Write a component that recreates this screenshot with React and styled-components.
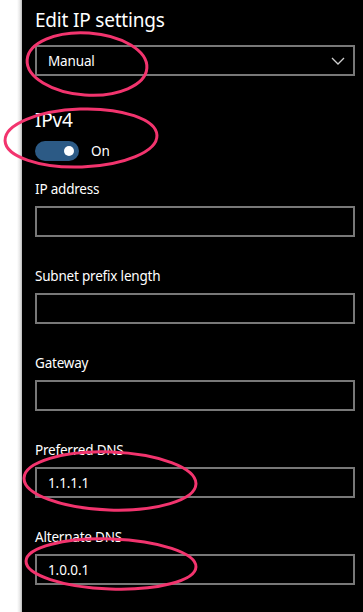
import React from "react";
import styled, { createGlobalStyle } from "styled-components";

const Global = createGlobalStyle`
  html, body { margin: 0; padding: 0; background: #000; }
  body { font-family: "Noto Sans", "Open Sans", sans-serif; color: #fff; }
  #root { min-height: 612px; }
`;

const Page = styled.div`
  position: relative;
  display: flex;
  width: 363px;
  height: 612px;
  overflow: hidden;
`;

const Strip = styled.div`
  width: 22px;
  flex: none;
  background: linear-gradient(to right, #ffffff 0, #ffffff 17px, #e6e6e6 20px, #b8b8b8 22px);
`;

const Panel = styled.div`
  flex: 1;
  background: #000;
  padding: 6px 8px 0 13px;
  display: flex;
  flex-direction: column;
`;

const Heading = styled.div`
  font-size: 19px;
  line-height: 28px;
  font-weight: 400;
  letter-spacing: -0.2px;
  color: #fff;
  margin-top: ${(p) => p.$top || 0}px;
`;

const Select = styled.div`
  box-sizing: border-box;
  height: 31px;
  margin-top: 11px;
  border: 2px solid #787878;
  display: flex;
  align-items: center;
  justify-content: space-between;
  padding: 0 8px 0 11px;
  font-size: 13.5px;
  letter-spacing: -0.15px;
`;

const ToggleRow = styled.div`
  display: flex;
  align-items: center;
  gap: 12px;
  margin-top: 7px;
  font-size: 13.5px;
`;

const Track = styled.div`
  width: 44px;
  height: 20px;
  border-radius: 10px;
  background: #2c5a85;
  display: flex;
  align-items: center;
  justify-content: flex-end;
  padding-right: 5px;
  box-sizing: border-box;
`;

const Knob = styled.div`
  width: 10px;
  height: 10px;
  border-radius: 50%;
  background: #fff;
`;

const Fields = styled.div`
  display: flex;
  flex-direction: column;
  gap: 29px;
  margin-top: 18px;
`;

const Field = styled.div`
  display: flex;
  flex-direction: column;
`;

const Label = styled.div`
  font-size: 13.5px;
  letter-spacing: -0.2px;
  line-height: 20px;
  margin-bottom: 7px;
`;

const Box = styled.div`
  box-sizing: border-box;
  height: 31px;
  border: 2px solid #787878;
  display: flex;
  align-items: center;
  padding-left: 11px;
  font-size: 13.5px;
  letter-spacing: -0.1px;
`;

const Marks = styled.svg`
  position: absolute;
  left: 0;
  top: 0;
  pointer-events: none;
`;

const Chevron = () => (
  <svg width="14" height="8" viewBox="0 0 14 8">
    <path d="M1 1 L7 7 L13 1" fill="none" stroke="#cfcfcf" strokeWidth="1.3" />
  </svg>
);

const fields = [
  { label: "IP address", value: "" },
  { label: "Subnet prefix length", value: "" },
  { label: "Gateway", value: "" },
  { label: "Preferred DNS", value: "1.1.1.1" },
  { label: "Alternate DNS", value: "1.0.0.1" },
];

export default function App() {
  return (
    <>
      <Global />
      <Page>
        <Strip />
        <Panel>
          <Heading>Edit IP settings</Heading>
          <Select>
            <span>Manual</span>
            <Chevron />
          </Select>
          <Heading $top={30}>IPv4</Heading>
          <ToggleRow>
            <Track>
              <Knob />
            </Track>
            <span>On</span>
          </ToggleRow>
          <Fields>
            {fields.map((f) => (
              <Field key={f.label}>
                <Label>{f.label}</Label>
                <Box>{f.value}</Box>
              </Field>
            ))}
          </Fields>
        </Panel>
        <Marks width="363" height="612" viewBox="0 0 363 612">
          <g fill="none" stroke="#f2346e" strokeWidth="3">
            <ellipse cx="87" cy="64" rx="60" ry="31" transform="rotate(4 87 64)" />
            <ellipse cx="81" cy="138" rx="76" ry="29" transform="rotate(-2 81 138)" />
            <ellipse cx="110" cy="481" rx="86" ry="29" transform="rotate(2 110 481)" />
            <ellipse cx="111" cy="564" rx="85" ry="25" transform="rotate(2 111 564)" />
          </g>
        </Marks>
      </Page>
    </>
  );
}
